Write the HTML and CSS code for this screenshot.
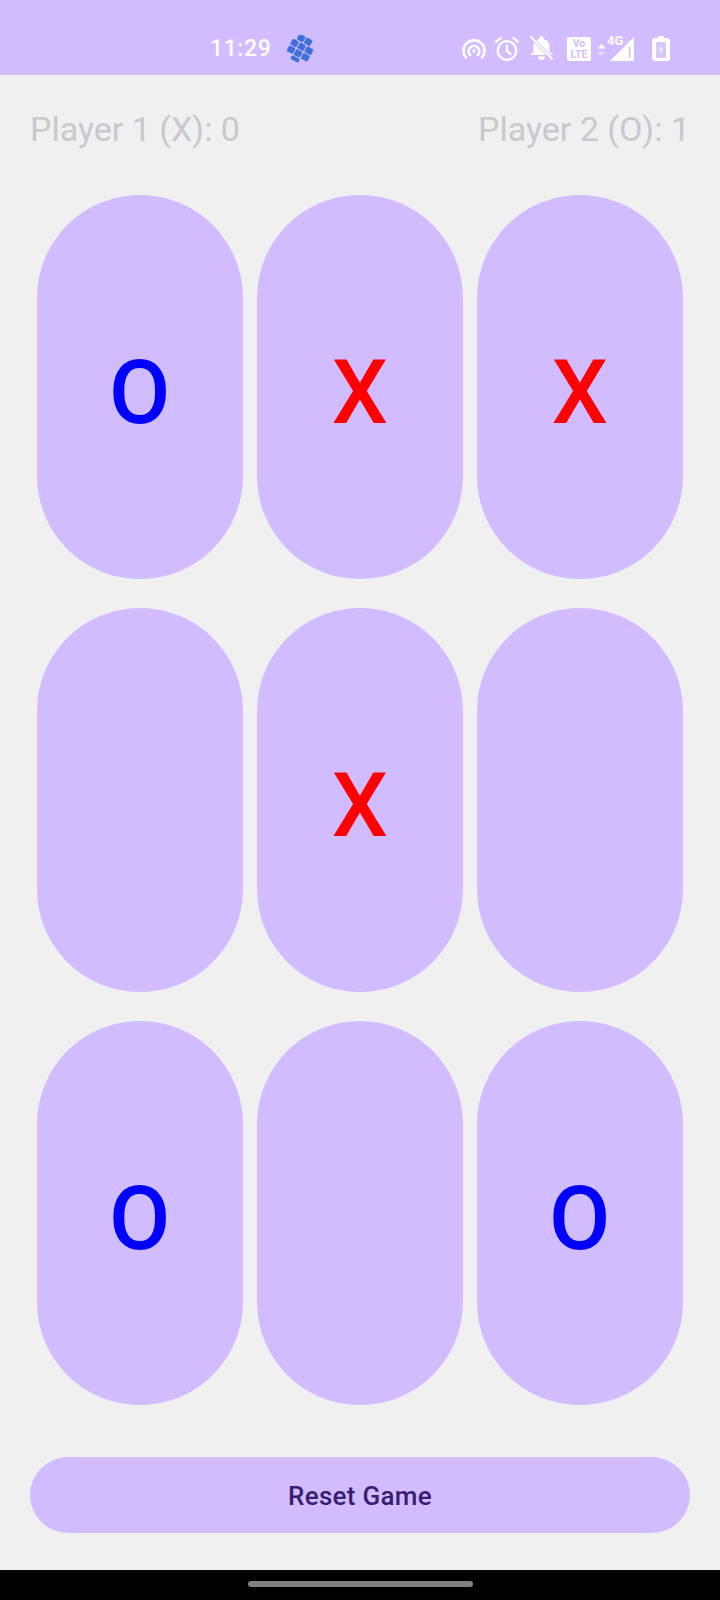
FILE: index.html
```html
<!DOCTYPE html>
<html lang="en">
<head>
<meta charset="utf-8">
<title>Tic Tac Toe</title>
<link rel="stylesheet" href="styles.css">
</head>
<body>
<div class="status">
  <div class="status-left">
    <span class="clock">11:29</span>
    <svg class="app-icon" viewBox="0 0 28 28" width="28" height="28">
      <g fill="#3f6fdc" transform="rotate(28 14 14)">
        <rect x="5.500" y="1" width="7" height="6.500" rx="1.200"/><rect x="13.500" y="1" width="7" height="6.500" rx="1.200"/>
        <rect x="2" y="8.500" width="7" height="6.500" rx="1.200"/><rect x="10" y="8.500" width="7" height="6.500" rx="1.200"/><rect x="18" y="8.500" width="7.500" height="6.500" rx="1.200"/>
        <rect x="2" y="16" width="7" height="6.500" rx="1.200"/><rect x="10" y="16" width="7" height="6.500" rx="1.200"/><rect x="18" y="16" width="7.500" height="6.500" rx="1.200"/>
        <rect x="9" y="23.500" width="9" height="4" rx="1.200"/>
      </g>
    </svg>
  </div>
  <div class="status-right">
    <svg class="ic-hot" viewBox="0 0 24 20" width="24" height="20" fill="none" stroke="#fff" stroke-width="2.600" stroke-linecap="round">
      <path d="M4 18.500A10.500 10.500 0 1 1 20 18.500"/><path d="M8.200 16A5.300 5.300 0 1 1 15.800 16"/><circle cx="12" cy="12" r="1.700" fill="#fff" stroke="none"/>
    </svg>
    <svg class="ic-alarm" viewBox="0 0 26 25" width="26" height="25" fill="none" stroke="#fff" stroke-width="2.300" stroke-linecap="round">
      <circle cx="13" cy="14.500" r="9.300"/><path d="M13 9.500V15l3.500 3"/><path d="M2 6l4.500-4M24 6l-4.500-4"/>
    </svg>
    <svg class="ic-bell" viewBox="0 0 25 25" width="25" height="25">
      <path fill="#fff" d="M12.500 0a2 2 0 0 1 2 2v1A8 8 0 0 1 20.500 10.500v5l3.500 3.500H1.500L4.500 15.500v-5a8 8 0 0 1 6-7.500V2a2 2 0 0 1 2-2zM9 20.500h7a3.500 3.500 0 0 1-7 0z"/>
      <path stroke="#d0bcff" stroke-width="3.500" d="M1 0l23 24"/>
      <path stroke="#fff" stroke-width="2" stroke-linecap="round" d="M2 1l21 22"/>
    </svg>
    <div class="ic-volte"><span>Vo</span><span>LTE</span></div>
    <div class="ic-signal">
      <span class="arrows">
        <svg viewBox="0 0 9 12" width="9" height="12"><path fill="#fff" d="M4.500 0l4 4.500H.5z"/><path fill="#fff" opacity=".45" d="M4.500 12l4-4.500H.5z"/></svg>
      </span>
      <span class="net">4G</span>
      <svg class="bars" viewBox="0 0 24 24" width="24" height="24"><path fill="#fff" d="M24 0v24H0zM20.500 8.500l-1.500 1.500v11h1.500z" fill-rule="evenodd"/></svg>
    </div>
    <svg class="ic-batt" viewBox="0 0 18 25" width="18" height="25">
      <path fill="#fff" fill-opacity=".18" d="M4 6h10v16H4z"/>
      <path fill="#fff" fill-rule="evenodd" d="M6 0h6v2h3a3 3 0 0 1 3 3v17a3 3 0 0 1-3 3H3a3 3 0 0 1-3-3V5a3 3 0 0 1 3-3h3zM4 7v14a1 1 0 0 0 1 1h8a1 1 0 0 0 1-1V7a1 1 0 0 0-1-1H5a1 1 0 0 0-1 1z"/>
      <path fill="#fff" d="M9.500 10L7.500 14h1.500v3l2-4H9.500z"/>
    </svg>
  </div>
</div>
<main class="game">
  <div class="scores">
    <span>Player 1 (X): 0</span>
    <span>Player 2 (O): 1</span>
  </div>
  <div class="board">
    <button class="cell o">O</button>
    <button class="cell x">X</button>
    <button class="cell x">X</button>
    <button class="cell"></button>
    <button class="cell x">X</button>
    <button class="cell"></button>
    <button class="cell o">O</button>
    <button class="cell"></button>
    <button class="cell o">O</button>
  </div>
  <button class="reset">Reset Game</button>
</main>
<div class="navbar"><span class="handle"></span></div>
</body>
</html>
```
FILE: styles.css
```css
* { box-sizing: border-box; }
html, body { margin: 0; padding: 0; }
body {
  width: 720px;
  height: 1600px;
  display: flex;
  flex-direction: column;
  background: #f0f0f0;
  font-family: Roboto, "Liberation Sans", sans-serif;
  overflow: hidden;
}
.status {
  height: 75px;
  flex: none;
  background: #d0bcff;
  display: flex;
  align-items: center;
  justify-content: space-between;
  padding: 22px 50px 0 210px;
}
.status-left { display: flex; align-items: center; gap: 16px; }
.clock { color: #fff; font-size: 23px; font-weight: 500; letter-spacing: 0.6px; }
.status-right { display: flex; align-items: center; }
.ic-hot { margin-right: 8px; }
.ic-alarm { margin-right: 9px; }
.ic-bell { margin-right: 13px; }
.ic-volte {
  width: 24px;
  height: 24px;
  margin-right: 6px;
  background: #fff;
  border-radius: 2px;
  color: #d0bcff;
  font-size: 10.500px;
  font-weight: 700;
  line-height: 11px;
  display: flex;
  flex-direction: column;
  align-items: center;
  justify-content: center;
}
.ic-signal { position: relative; width: 37px; height: 24px; margin-right: 18px; display: flex; justify-content: flex-end; align-items: flex-end; }
.arrows { position: absolute; left: 0; top: 7px; line-height: 0; }
.net { position: absolute; left: 10px; top: -2px; color: #fff; font-size: 13px; line-height: 12px; font-weight: 700; }
.game {
  flex: 1;
  display: flex;
  flex-direction: column;
  padding: 0 30px 37px;
}
.scores {
  display: flex;
  justify-content: space-between;
  padding-top: 32px;
  height: 120px;
  font-size: 34px;
  line-height: 44px;
  color: #cac7cf;
}
.board {
  display: grid;
  grid-template-columns: repeat(3, 205.500px);
  grid-template-rows: repeat(3, 384px);
  column-gap: 14.500px;
  row-gap: 29px;
  padding: 0 7px;
}
.cell {
  border: 0;
  padding: 10px 0 0;
  background: #d0bcff;
  border-radius: 102.750px;
  font-family: inherit;
  font-size: 89px;
  font-weight: 500;
  line-height: 1;
}
.x { color: #ff0000; }
.o { color: #0000ff; }
.reset {
  margin-top: auto;
  height: 76px;
  border: 0;
  border-radius: 38px;
  padding-top: 2px;
  background: #d0bcff;
  color: #381e72;
  font-family: inherit;
  font-size: 26px;
  font-weight: 500;
  letter-spacing: 0.300px;
}
.navbar {
  height: 30px;
  flex: none;
  background: #000;
  display: flex;
  justify-content: center;
  padding-top: 11px;
}
.handle { width: 225px; height: 6px; border-radius: 3px; background: #7f7f7f; }
```
